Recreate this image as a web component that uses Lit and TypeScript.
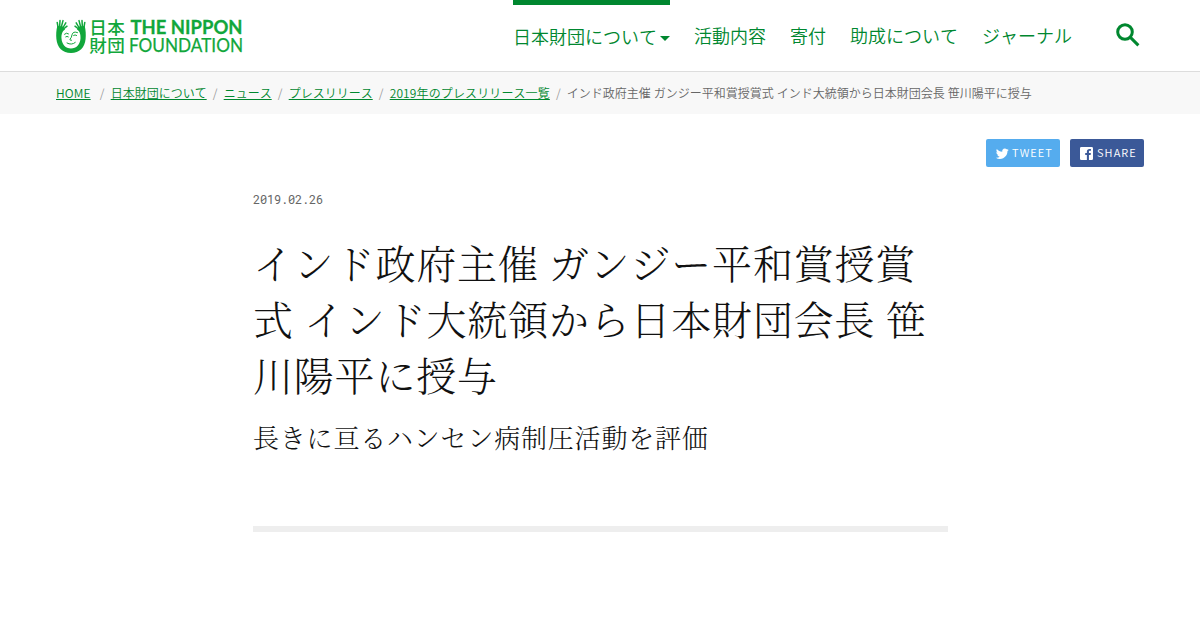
import { LitElement, css, html, svg } from 'lit';
import { customElement, property } from 'lit/decorators.js';

const NAV_ITEMS = ['日本財団について', '活動内容', '寄付', '助成について', 'ジャーナル'];

const BREADCRUMBS = [
  'HOME',
  '日本財団について',
  'ニュース',
  'プレスリリース',
  '2019年のプレスリリース一覧',
];

const TWITTER_ICON = svg`
  <path d="M23.6 4.9c-.9.4-1.8.7-2.8.8 1-.6 1.8-1.6 2.1-2.7-.9.6-2 1-3.1 1.2A4.9 4.9 0 0 0 11.5 8.600C7.400 8.400 3.800 6.500 1.400 3.500a4.900 4.900 0 0 0 1.500 6.500c-.8 0-1.600-.2-2.200-.6v.1c0 2.400 1.700 4.400 3.900 4.800-.7.2-1.500.2-2.200.1.600 2 2.400 3.400 4.600 3.400A9.900 9.900 0 0 1-.3 19.800a13.900 13.900 0 0 0 7.500 2.200c9.100 0 14-7.500 14-14v-.6c1-.7 1.800-1.600 2.400-2.500z" />
`;

const FACEBOOK_ICON = svg`
  <path d="M21.500 0h-19A2.500 2.500 0 0 0 0 2.500v19A2.500 2.500 0 0 0 2.500 24h10.200v-9.300H9.600v-3.600h3.100V8.400c0-3.100 1.900-4.800 4.700-4.800 1.300 0 2.500.1 2.800.1V7h-1.900c-1.500 0-1.800.7-1.800 1.800v2.300h3.600l-.5 3.600h-3.100V24h5A2.500 2.500 0 0 0 24 21.500v-19A2.500 2.500 0 0 0 21.500 0z" />
`;

/** Logo: face with raised hands followed by the wordmark. */
@customElement('site-logo')
export class SiteLogo extends LitElement {
  render() {
    return html`
      <svg width="188" height="36" viewBox="0 0 188 36">
        <path
          d="M1.300 8C.2 12 0 17 .4 21C1.200 29.500 6.500 35 15 35C23.500 35 28.800 29.500 29.600 21C30 17 29.800 12 28.700 8L23 8.500L21 11.500C23.800 13 24.800 17 24.500 20.500C24 26.500 20.500 30.500 15 30.500C9.500 30.500 6 26.500 5.500 20.500C5.200 17 6.200 13 9 11.500L7 8.500Z"
        />
        <path class="finger" d="M2 9L1.200 4.400M3.600 9L4 2.600M5.300 9L7 2.600M6.800 10L9.800 4.800M7.500 11L11 8.200M28 9L28.800 4.400M26.400 9L26 2.600M24.700 9L23 2.600M23.200 10L20.200 4.800M22.500 11L19 8.200" />
        <path class="line" d="M8.500 16.200Q10.500 14.200 12.500 15.800M9.700 18.800Q11 17.800 12.300 18.800M21.500 14.600Q17 12.800 16 16.800Q15.700 19.500 14 21.200Q13.500 22.500 15.500 22.300M17.600 17.400Q19 16.200 20.600 17.400M11 25Q15.500 27.600 19.300 24.400" />
        <text class="kanji" x="33.300" y="15.900" textLength="35.500">日本</text>
        <text class="kanji" x="33.300" y="34" textLength="35.500">財団</text>
        <text class="bold" x="74.500" y="16.100" textLength="112" lengthAdjust="spacingAndGlyphs">THE NIPPON</text>
        <text class="regular" x="73" y="34.200" textLength="114" lengthAdjust="spacingAndGlyphs">FOUNDATION</text>
      </svg>
    `;
  }

  static styles = css`
    :host {
      display: block;
      height: 36px;
    }

    svg {
      display: block;
      overflow: visible;
      fill: #11a73b;
    }

    .finger,
    .line {
      fill: none;
      stroke: #11a73b;
      stroke-width: 1.5;
      stroke-linecap: round;
    }

    .line {
      stroke-width: 1;
    }

    .kanji {
      font: 500 17.5px 'Noto Sans CJK JP', sans-serif;
    }

    .bold {
      font: 700 19px Lato, sans-serif;
      stroke: #11a73b;
      stroke-width: 0.3;
    }

    .regular {
      font: 400 19px Lato, sans-serif;
      stroke: #11a73b;
      stroke-width: 0.25;
    }
  `;
}

@customElement('share-button')
export class ShareButton extends LitElement {
  @property({ type: String, reflect: true })
  service = 'twitter';
  @property({ type: String })
  label = '';

  render() {
    return html`
      <svg viewBox="0 0 24 24">
        ${this.service === 'twitter' ? TWITTER_ICON : FACEBOOK_ICON}
      </svg>
      <span>${this.label}</span>
    `;
  }

  static styles = css`
    :host {
      box-sizing: border-box;
      display: flex;
      align-items: center;
      gap: 4px;
      width: 74px;
      height: 28px;
      padding-left: 10px;
      border-radius: 2px;
      color: #fff;
      background: #55acee;
      font-size: 11px;
      line-height: 26px;
      letter-spacing: 1.1px;
    }

    :host([service='twitter']) {
      gap: 3px;
    }

    :host([service='facebook']) {
      background: #3b5998;
    }

    span {
      height: 28px;
    }

    svg {
      flex: none;
      width: 13px;
      height: 13px;
      fill: currentColor;
      overflow: visible;
    }
  `;
}

@customElement('app-root')
export class AppRoot extends LitElement {
  render() {
    return html`
      <header class="header">
        <site-logo></site-logo>
        <nav class="nav">
          ${NAV_ITEMS.map(
            (item, i) => html`
              <a class="nav-item ${i === 0 ? 'current' : ''}"
                >${item}${i === 0 ? html`<i class="caret"></i>` : ''}</a
              >
            `
          )}
        </nav>
        <svg class="search" viewBox="0 0 24 24">
          <circle cx="9" cy="9" r="7.300" />
          <path d="M14.400 14.400L22.400 22.400" />
        </svg>
      </header>

      <div class="breadcrumbs">
        ${BREADCRUMBS.map(
          (crumb, i) => html`
            <a class="crumb ${/^[A-Z0-9]/.test(crumb) ? 'latin' : ''}">${crumb}</a>
            <span class="slash ${i === 0 ? 'first' : ''}">/</span>
          `
        )}
        <span class="here">インド政府主催 ガンジー平和賞授賞式 インド大統領から日本財団会長 笹川陽平に授与</span>
      </div>

      <div class="share">
        <share-button service="twitter" label="TWEET"></share-button>
        <share-button service="facebook" label="SHARE"></share-button>
      </div>

      <main class="article">
        <time class="date">2019.02.26</time>
        <h1 class="title">
          インド政府主催 ガンジー平和賞授賞式 インド大統領から日本財団会長 笹川陽平に授与
        </h1>
        <p class="subtitle">長きに亘るハンセン病制圧活動を評価</p>
        <hr class="rule" />
      </main>
    `;
  }

  static styles = css`
    :host {
      display: block;
      height: 630px;
      overflow: hidden;
      background: #fff;
      color: #111;
      font-family: 'Noto Sans CJK JP', sans-serif;
      font-weight: 350;
      font-kerning: none;
    }

    .header {
      box-sizing: border-box;
      display: flex;
      align-items: flex-start;
      height: 72px;
      padding: 0 60px 0 56px;
      border-bottom: 1px solid #ddd;
    }

    site-logo {
      margin-top: 18px;
    }

    .nav {
      display: flex;
      gap: 24px;
      margin-left: auto;
    }

    .nav-item {
      box-sizing: border-box;
      height: 71px;
      padding-top: 22px;
      color: #00872f;
      font-size: 18px;
      line-height: 27px;
      white-space: nowrap;
    }

    .nav-item.current {
      padding-top: 18px;
      border-top: 5px solid #00872f;
    }

    .caret {
      display: inline-block;
      margin-left: 3px;
      border: 5px solid transparent;
      border-top-color: currentColor;
      border-bottom: 0;
      vertical-align: 3px;
    }

    .search {
      width: 24px;
      height: 24px;
      margin: 23px 0 0 44px;
      fill: none;
      stroke: #00872f;
      stroke-width: 3;
    }

    .breadcrumbs {
      box-sizing: border-box;
      display: flex;
      align-items: center;
      height: 42px;
      padding: 0 56px;
      background: #f8f8f8;
      color: #666;
      font-size: 12px;
      line-height: 18px;
      white-space: nowrap;
    }

    .crumb {
      color: #00872f;
      text-decoration: underline;
    }

    .crumb.latin {
      letter-spacing: 0.12px;
    }

    .slash {
      width: 17px;
      text-align: center;
      color: #999;
    }

    .slash.first {
      padding-left: 3px;
    }

    .here {
      word-spacing: 0.3px;
    }

    .share {
      display: flex;
      justify-content: flex-end;
      gap: 10px;
      padding: 25px 56px 0;
    }

    .article {
      width: 695px;
      margin: 22px 0 0 253px;
    }

    .date {
      display: block;
      color: #666;
      font: 12px/20px 'Roboto Mono', 'Liberation Mono', monospace;
      letter-spacing: -0.2px;
    }

    .title,
    .subtitle {
      margin: 0;
      font-family: 'Noto Serif CJK JP', 'Noto Serif JP', 'Noto Sans CJK JP', serif;
      font-weight: 300;
      letter-spacing: 0.8px;
      word-spacing: -0.8px;
    }

    .title {
      margin-top: 25px;
      font-size: 40px;
      line-height: 56px;
    }

    .subtitle {
      margin-top: 15px;
      font-size: 26px;
      line-height: 39px;
    }

    .rule {
      height: 6px;
      margin: 70px 0 0;
      border: 0;
      background: #eee;
    }
  `;
}

declare global {
  interface HTMLElementTagNameMap {
    'site-logo': SiteLogo;
    'share-button': ShareButton;
    'app-root': AppRoot;
  }
}
